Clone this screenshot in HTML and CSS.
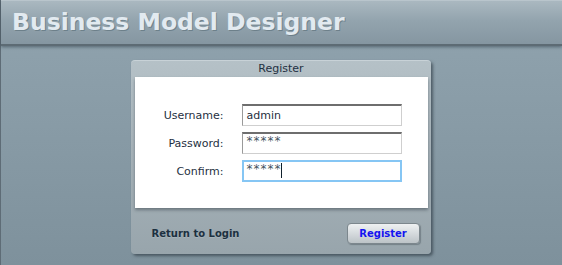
FILE: index.html
```html
<!DOCTYPE html>
<html>
<head>
<meta charset="utf-8">
<title>Business Model Designer</title>
<link rel="stylesheet" href="styles.css">
</head>
<body>
<div class="page">
  <header class="topbar">
    <h1 class="app-title">Business Model Designer</h1>
  </header>
  <main class="stage">
    <section class="panel">
      <div class="panel-title">Register</div>
      <div class="panel-body">
        <div class="form-grid">
          <label class="label">Username:</label>
          <div class="field">admin</div>
          <label class="label">Password:</label>
          <div class="field secret">*****</div>
          <label class="label">Confirm:</label>
          <div class="field secret focused">*****<span class="caret"></span></div>
        </div>
      </div>
      <div class="panel-footer">
        <a class="link">Return to Login</a>
        <button class="btn">Register</button>
      </div>
    </section>
  </main>
</div>
</body>
</html>
```
FILE: styles.css
```css
html, body {
  margin: 0;
  padding: 0;
  height: 100%;
}
body {
  font-family: "DejaVu Sans", Verdana, sans-serif;
  background: linear-gradient(#91a4af, #7e919c);
  overflow: hidden;
}
.page {
  height: 100%;
  border-left: 1px solid #5e6c76;
  box-sizing: border-box;
}
.topbar {
  background: linear-gradient(#aab8c0 0%, #93a4ae 45%, #8596a1 100%);
  border-top: 1px solid #b9c5cc;
  border-bottom: 2px solid #5d6b74;
  box-shadow: 0 1px 3px rgba(40, 55, 65, 0.55);
  box-sizing: border-box;
  height: 46px;
}
.app-title {
  margin: 0;
  padding-left: 11px;
  font-size: 23.5px;
  font-weight: bold;
  line-height: 43px;
  color: #e2eaf0;
  text-shadow: 1px 1px 0 rgba(70, 90, 100, 0.45);
}
.stage {
  display: flex;
  justify-content: center;
  padding-top: 14px;
  padding-right: 2px;
}
.panel {
  width: 300px;
  border-radius: 4px;
  background: linear-gradient(#b5c1c7, #a7b3b9 45%, #98a5ac);
  box-shadow: 2px 2px 3px rgba(30, 40, 50, 0.55);
  border-top: 1px solid #c8d2d7;
  padding: 0 3px 0 4px;
  box-sizing: border-box;
}
.panel-title {
  height: 16px;
  line-height: 16px;
  text-align: center;
  font-size: 11px;
  color: #1f3142;
}
.panel-body {
  background: #ffffff;
  box-shadow: 0 2px 3px rgba(40, 50, 60, 0.45);
  padding: 27px 0 26px 0;
}
.form-grid {
  display: grid;
  grid-template-columns: 89px 160px;
  column-gap: 18px;
  row-gap: 6px;
  align-items: center;
}
.label {
  text-align: right;
  font-size: 11px;
  color: #1f3142;
}
.field {
  height: 22px;
  box-sizing: border-box;
  border: 1px solid #cfcfcf;
  border-top: 2px solid #6e6e6e;
  border-left: 1px solid #9a9a9a;
  font-size: 11px;
  line-height: 19px;
  padding-left: 4px;
  color: #1f2f40;
  display: flex;
  align-items: center;
}
.secret {
  font-size: 12px;
  letter-spacing: 1px;
  color: #46545f;
  align-items: flex-start;
  line-height: 15px;
}
.focused {
  border: 2px solid #86c6f4;
  padding-left: 3px;
}
.caret {
  display: inline-block;
  width: 1px;
  height: 15px;
  background: #10202c;
  margin-left: -1px;
  margin-top: 1px;
}
.panel-footer {
  display: flex;
  justify-content: space-between;
  align-items: center;
  padding: 15px 8px 10px 17px;
}
.link {
  font-size: 10px;
  font-weight: bold;
  color: #1c3040;
  text-shadow: 0 1px 0 rgba(200, 210, 215, 0.3);
}
.btn {
  width: 73px;
  height: 21px;
  border: 1px solid #7c878d;
  border-radius: 4px;
  background: linear-gradient(#eef1f2, #d5dadd 50%, #bcc3c7);
  box-shadow: 1px 1px 1px rgba(50, 60, 70, 0.35);
  font-family: "DejaVu Sans", Verdana, sans-serif;
  font-size: 10px;
  font-weight: bold;
  color: #1414f0;
  padding: 0;
}
```
